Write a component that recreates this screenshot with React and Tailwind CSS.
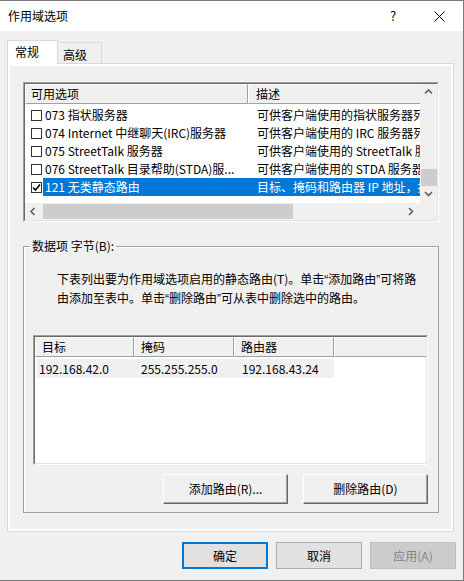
import React from "react";

const rows = [
  { c: false, n: "073 指状服务器", d: "可供客户端使用的指状服务器列表" },
  { c: false, n: "074 Internet 中继聊天(IRC)服务器", d: "可供客户端使用的 IRC 服务器列表" },
  { c: false, n: "075 StreetTalk 服务器", d: "可供客户端使用的 StreetTalk 服务器列表" },
  { c: false, n: "076 StreetTalk 目录帮助(STDA)服...", d: "可供客户端使用的 STDA 服务器列表" },
  { c: true, s: true, n: "121 无类静态路由", d: "目标、掩码和路由器 IP 地址，按顺序" },
];

function Chevron({ dir }) {
  const pts = {
    up: "1,5.5 4.5,2 8,5.5",
    down: "1,2 4.5,5.5 8,2",
    left: "5.5,1 2,4.5 5.5,8",
    right: "2,1 5.5,4.5 2,8",
  }[dir];
  return (
    <svg width="9" height="9" viewBox="0 0 9 9">
      <polyline points={pts} fill="none" stroke="#606060" strokeWidth="1.6" />
    </svg>
  );
}

function Check({ checked }) {
  return (
    <div className="w-[11px] h-[11px] border border-[#333333] bg-white flex items-center justify-center">
      {checked && (
        <svg width="9" height="9" viewBox="0 0 9 9">
          <polyline points="1,4.5 3.5,7 8,1.5" fill="none" stroke="#000" strokeWidth="1.6" />
        </svg>
      )}
    </div>
  );
}

function Q({ children }) {
  return <span className="font-['Liberation_Sans',sans-serif]">{children}</span>;
}

export default function App() {
  return (
    <div className="w-[464px] h-[581px] bg-[#f0f0f0] border-t border-r border-b border-[#7a7a7a] flex flex-col text-[12px] leading-[18px] text-black font-['Noto_Sans_CJK_SC','Noto_Sans',sans-serif] overflow-hidden">
      {/* title bar */}
      <div className="h-[30px] bg-white flex items-center shrink-0">
        <div className="pl-[8px] flex-1">作用域选项</div>
        <div className="w-[46px] text-center text-[13px]">?</div>
        <div className="w-[47px] flex items-center justify-center">
          <svg width="11" height="11" viewBox="0 0 11 11">
            <line x1="0.5" y1="0.5" x2="10.5" y2="10.5" stroke="#000" strokeWidth="1" />
            <line x1="10.5" y1="0.5" x2="0.5" y2="10.5" stroke="#000" strokeWidth="1" />
          </svg>
        </div>
      </div>

      <div className="pl-[7px] pt-[9px] flex flex-col">
        {/* tabs */}
        <div className="flex items-start h-[23px]">
          <div className="relative z-10 w-[51px] h-[24px] bg-white border border-b-0 border-[#d9d9d9] pl-[7px] pt-[2px]">常规</div>
          <div className="w-[44px] h-[21px] mt-[2px] border border-l-0 border-b-0 border-[#d9d9d9] pl-[5px] pt-[3px]">高级</div>
        </div>

        {/* panel */}
        <div className="w-[447px] h-[469px] border border-[#d9d9d9]">
          <div className="w-full h-full border-2 border-white pl-[13px] pt-[16px] flex flex-col">
            {/* list view */}
            <div className="w-[416px] h-[140px] border-t border-l border-[#a0a0a0] border-b border-r border-b-white border-r-white">
              <div className="w-full h-full border-t border-l border-t-[#696969] border-l-[#696969] border-b border-r border-b-[#e3e3e3] border-r-[#e3e3e3] flex flex-col">
                <div className="flex h-[119px]">
                  <div className="w-[395px] bg-white overflow-hidden flex flex-col">
                    <div className="flex h-[20px] bg-[#f0f0f0] shrink-0">
                      <div className="w-[223px] pl-[5px] border-r border-b border-[#a0a0a0] border-t border-l border-t-white border-l-white leading-[17px] whitespace-nowrap">可用选项</div>
                      <div className="w-[172px] pl-[7px] border-b border-[#a0a0a0] border-t border-l border-t-white border-l-white leading-[17px] whitespace-nowrap">描述</div>
                    </div>
                    <div className="pt-[2px] flex flex-col">
                      {rows.map((r, i) => (
                        <div key={i} className="flex h-[18px] items-center whitespace-nowrap">
                          <div className="w-[18px] pl-[6px] shrink-0">
                            <Check checked={r.c} />
                          </div>
                          <div className={r.s ? "flex h-[18px] items-center bg-[#0078d7] text-white" : "flex h-[18px] items-center"}>
                            <div className="w-[205px] pl-[2px] overflow-hidden">{r.n}</div>
                            <div className="w-[172px] pl-[9px] overflow-hidden">{r.d}</div>
                          </div>
                        </div>
                      ))}
                    </div>
                  </div>
                  <div className="w-[17px] bg-[#f0f0f0] flex flex-col">
                    <div className="h-[17px] flex items-center justify-center"><Chevron dir="up" /></div>
                    <div className="flex-1" />
                    <div className="h-[17px] ml-[1px] bg-[#cdcdcd]" />
                    <div className="h-[17px] flex items-center justify-center"><Chevron dir="down" /></div>
                  </div>
                </div>
                <div className="flex h-[17px]">
                  <div className="w-[395px] bg-[#f0f0f0] flex items-stretch">
                    <div className="w-[17px] flex items-center justify-center"><Chevron dir="left" /></div>
                    <div className="w-[250px] ml-[1px] my-[1px] bg-[#cdcdcd]" />
                    <div className="flex-1" />
                    <div className="w-[17px] flex items-center justify-center"><Chevron dir="right" /></div>
                  </div>
                  <div className="w-[17px] bg-[#f0f0f0]" />
                </div>
              </div>
            </div>

            {/* group box */}
            <div className="relative mt-[24px] w-[416px] h-[267px] border border-[#a0a0a0] shadow-[inset_1px_1px_0_#ffffff] flex flex-col">
              <span className="absolute -top-[10px] left-[6px] px-[2px] bg-[#f0f0f0] leading-[18px]">数据项 字节(B):</span>
              <div className="pl-[33px] pt-[23px] leading-[18px] whitespace-nowrap">
                <div>下表列出要为作用域选项启用的静态路由(T)。单击<Q>“</Q>添加路由<Q>”</Q>可将路</div>
                <div>由添加至表中。单击<Q>“</Q>删除路由<Q>”</Q>可从表中删除选中的路由。</div>
              </div>
              {/* route table */}
              <div className="ml-[9px] mt-[27px] w-[395px] h-[130px] border-t border-l border-[#a0a0a0] border-b border-r border-b-white border-r-white">
                <div className="w-full h-full bg-white border-t border-l border-t-[#696969] border-l-[#696969] border-b border-r border-b-[#e3e3e3] border-r-[#e3e3e3] flex flex-col">
                  <div className="flex h-[20px] bg-[#f0f0f0] shrink-0">
                    <div className="w-[99px] pl-[6px] border-r border-b border-[#a0a0a0] border-t border-l border-t-white border-l-white leading-[17px]">目标</div>
                    <div className="w-[100px] pl-[6px] border-r border-b border-[#a0a0a0] border-t border-l border-t-white border-l-white leading-[17px]">掩码</div>
                    <div className="w-[100px] pl-[6px] border-r border-b border-[#a0a0a0] border-t border-l border-t-white border-l-white leading-[17px]">路由器</div>
                    <div className="flex-1 border-b border-[#a0a0a0] border-t border-l border-t-white border-l-white" />
                  </div>
                  <div className="mt-[2px] ml-[2px] w-[297px] h-[19px] bg-[#f0f0f0] flex items-center whitespace-nowrap">
                    <div className="w-[97px] pl-[2px]">192.168.42.0</div>
                    <div className="w-[100px] pl-[7px]">255.255.255.0</div>
                    <div className="w-[100px] pl-[8px]">192.168.43.24</div>
                  </div>
                </div>
              </div>
              <div className="mt-[9px] flex justify-end pr-[10px] gap-[15px]">
                <div className="w-[125px] h-[30px] bg-[#f0f0f0] border-t border-l border-white border-b border-r border-b-[#696969] border-r-[#696969] shadow-[inset_-1px_-1px_0_#a0a0a0] flex items-center justify-center">添加路由(R)...</div>
                <div className="w-[125px] h-[30px] bg-[#f0f0f0] border-t border-l border-white border-b border-r border-b-[#696969] border-r-[#696969] shadow-[inset_-1px_-1px_0_#a0a0a0] flex items-center justify-center">删除路由(D)</div>
              </div>
            </div>
          </div>
        </div>
      </div>

      {/* bottom buttons */}
      <div className="mt-[10px] flex justify-end pr-[7px] gap-[8px]">
        <div className="w-[86px] h-[27px] bg-[#e1e1e1] border-2 border-[#0078d7] flex items-center justify-center">确定</div>
        <div className="w-[86px] h-[27px] bg-[#e1e1e1] border border-[#adadad] flex items-center justify-center">取消</div>
        <div className="w-[86px] h-[27px] bg-[#cccccc] border border-[#bfbfbf] text-[#838383] flex items-center justify-center">应用(A)</div>
      </div>
    </div>
  );
}
